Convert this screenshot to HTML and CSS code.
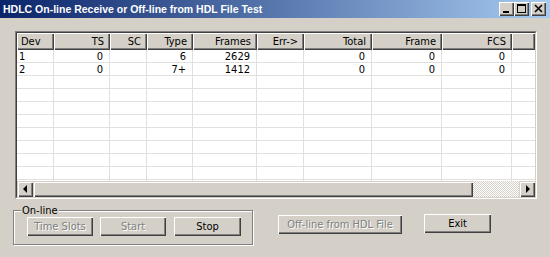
FILE: index.html
```html
<!DOCTYPE html>
<html lang="en">
	<head>
		<meta charset="UTF-8" />
		<title>HDLC Test</title>
		<link rel="stylesheet" href="styles.css">
	</head>
	<body>
		<div class="window">
			<div class="titlebar">
				<span class="title">HDLC On-line Receive or Off-line from HDL File Test</span>
				<div class="caps">
					<div class="cap">
						<svg width="15" height="14" viewBox="0 0 15 14"><rect x="4" y="9" width="6" height="2" fill="#000" /></svg>
					</div>
					<div class="cap">
						<svg width="15" height="14" viewBox="0 0 15 14">
							<rect x="3.5" y="2.5" width="8" height="8" fill="none" stroke="#000" />
							<rect x="3" y="2" width="9" height="2" fill="#000" />
						</svg>
					</div>
					<div class="cap close">
						<svg width="15" height="14" viewBox="0 0 15 14">
							<path d="M4 3 L11 10 M11 3 L4 10" stroke="#000" stroke-width="1.6" />
						</svg>
					</div>
				</div>
			</div>

			<div class="listview">
				<div class="lv-inner">
					<div class="lv-head">
						<div class="hcell left">Dev</div>
						<div class="hcell">TS</div>
						<div class="hcell">SC</div>
						<div class="hcell">Type</div>
						<div class="hcell">Frames</div>
						<div class="hcell">Err-&gt;</div>
						<div class="hcell">Total</div>
						<div class="hcell">Frame</div>
						<div class="hcell">FCS</div>
						<div class="hcell"></div>
					</div>
					<div class="lv-body" id="rows"></div>
					<div class="hscroll">
						<div class="sb-btn"><span class="arrow-left"></span></div>
						<div class="sb-thumb"></div>
						<div class="sb-track"></div>
						<div class="sb-btn"><span class="arrow-right"></span></div>
					</div>
				</div>
			</div>

			<div class="bottom">
				<fieldset class="group">
					<legend>On-line</legend>
					<div class="btn-row">
						<button class="btn" disabled>Time Slots</button>
						<button class="btn" disabled>Start</button>
						<button class="btn stop">Stop</button>
					</div>
				</fieldset>
				<button class="btn offline" disabled>Off-line from HDL File</button>
				<button class="btn exit">Exit</button>
			</div>
		</div>

		<script>
			const data = [
				['1', '0', '', '6', '2629', '', '0', '0', '0', ''],
				['2', '0', '', '7+', '1412', '', '0', '0', '0', '']
			]
			let html = ''
			for (let r = 0; r < 11; r++) {
				const row = data[r] || ['', '', '', '', '', '', '', '', '', '']
				html += '<div class="row">'
				row.forEach((v, i) => {
					html += `<div class="cell${i === 0 ? ' left' : ''}">${v}</div>`
				})
				html += '</div>'
			}
			document.getElementById('rows').innerHTML = html
		</script>
	</body>
</html>
```

FILE: styles.css
```css
body {
	margin: 0;
	background-color: #d4d0c8;
	font-family: "Liberation Sans Narrow", "DejaVu Sans Condensed", "Liberation Sans", Arial, sans-serif;
	font-size: 11px;
	color: #000;
}

.window {
	width: 550px;
	height: 257px;
	overflow: hidden;
}

.titlebar {
	height: 18px;
	display: flex;
	align-items: center;
	justify-content: space-between;
	padding: 0 4px 0 3px;
	background: linear-gradient(to right, #0a246a, #a6caf0);
}

.title {
	color: #fff;
	font-family: "Liberation Sans", Arial, sans-serif;
	font-weight: bold;
	font-size: 10.5px;
	white-space: nowrap;
}

.caps {
	display: flex;
}

.cap {
	width: 15px;
	height: 14px;
	background-color: #d4d0c8;
	box-shadow: inset 1px 1px #fff, inset -1px -1px #404040, inset -2px -2px #808080;
}

.cap svg {
	display: block;
}

.cap.close {
	margin-left: 2px;
}

/* list view */
.listview {
	margin: 13px 0 0 15px;
	width: 522px;
	height: 168px;
	box-sizing: border-box;
	border: 1px solid;
	border-color: #808080 #fff #fff #808080;
}

.lv-inner {
	height: 100%;
	box-sizing: border-box;
	border: 1px solid;
	border-color: #404040 #d4d0c8 #d4d0c8 #404040;
	display: flex;
	flex-direction: column;
	background-color: #fff;
}

.lv-head,
.row {
	display: grid;
	grid-template-columns: 37px 56px 37px 46px 64px 47px 68px 70px 70px 23px;
}

.hcell {
	height: 17px;
	line-height: 17px;
	box-sizing: border-box;
	padding: 0 6px 0 4px;
	text-align: right;
	background-color: #d4d0c8;
	box-shadow: inset 1px 1px #fff, inset -1px -1px #404040, inset -2px -2px #808080;
	white-space: nowrap;
}

.lv-body {
	height: 131px;
	overflow: hidden;
}

.row {
	height: 13px;
}

.cell {
	height: 13px;
	line-height: 13px;
	box-sizing: border-box;
	padding: 0 6px 0 2px;
	text-align: right;
	border-right: 1px solid #e2e0dc;
	border-bottom: 1px solid #e2e0dc;
}

.cell:last-child {
	border-right: none;
}

.left {
	text-align: left;
}

.hscroll {
	height: 16px;
	display: flex;
	background-color: #d4d0c8;
}

.sb-btn,
.sb-thumb {
	height: 16px;
	box-sizing: border-box;
	background-color: #d4d0c8;
	box-shadow: inset 1px 1px #d4d0c8, inset 2px 2px #fff, inset -1px -1px #404040, inset -2px -2px #808080;
}

.sb-btn {
	width: 16px;
	display: flex;
	align-items: center;
	justify-content: center;
}

.sb-thumb {
	width: 440px;
}

.sb-track {
	flex: 1;
	background: repeating-conic-gradient(#fff 0 25%, #d4d0c8 0 50%);
	background-size: 2px 2px;
}

.arrow-left {
	width: 0;
	height: 0;
	border-top: 4px solid transparent;
	border-bottom: 4px solid transparent;
	border-right: 4px solid #000;
	margin-left: -1px;
}

.arrow-right {
	width: 0;
	height: 0;
	border-top: 4px solid transparent;
	border-bottom: 4px solid transparent;
	border-left: 4px solid #000;
	margin-left: 1px;
}

/* bottom controls */
.bottom {
	display: flex;
	align-items: flex-start;
	margin: 5px 0 0 13px;
}

.group {
	margin: 0;
	width: 240px;
	box-sizing: border-box;
	padding: 0 11px 8px 13px;
	border: 1px solid #808080;
	box-shadow: inset 1px 1px #fff, 1px 1px #fff;
}

.group legend {
	padding: 0 1px;
	margin-left: -6px;
	line-height: 13px;
	background-color: #d4d0c8;
}

.btn-row {
	display: flex;
	gap: 7px;
}

.btn {
	width: 66px;
	height: 19px;
	padding: 0;
	border: none;
	background-color: #d4d0c8;
	font-family: inherit;
	font-size: 11px;
	color: #000;
	box-shadow: inset 1px 1px #fff, inset -1px -1px #404040, inset -2px -2px #808080;
}

.btn:disabled {
	color: #808080;
	text-shadow: 1px 1px 0 #fff;
}

.stop {
	width: 67px;
	margin-left: 1px;
}

.offline {
	width: 124px;
	margin: 11px 0 0 25px;
}

.exit {
	width: 67px;
	margin: 10px 0 0 22px;
}
```
